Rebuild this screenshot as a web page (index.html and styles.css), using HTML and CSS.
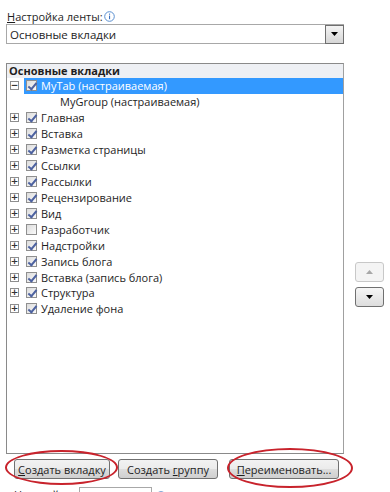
FILE: index.html
```html
<!DOCTYPE html>
<html>
<head>
<meta charset="utf-8">
<link rel="stylesheet" href="styles.css">
</head>
<body>
<div class="page">
  <div class="label-row">
    <span class="label"><u>Н</u>астройка ленты:</span>
    <svg class="info" width="11" height="11" viewBox="0 0 11 11"><circle cx="5.5" cy="5.5" r="4.8" fill="#fff" stroke="#5a8fd0" stroke-width="1"/><rect x="5" y="2.6" width="1.1" height="1.1" fill="#3a70c0"/><rect x="5" y="4.6" width="1.1" height="3.6" fill="#3a70c0"/></svg>
  </div>
  <div class="select">
    <span class="select-text">Основные вкладки</span>
    <span class="select-btn"><svg width="7" height="4" viewBox="0 0 7 4"><path d="M0 0H7L3.5 4Z" fill="#000"/></svg></span>
  </div>
  <div class="main">
    <div class="list">
      <div class="list-head">Основные вкладки</div>
      <div class="row selected">
        <span class="exp">−</span>
        <span class="hl"><span class="cb on"></span><span class="txt">MyTab (настраиваемая)</span></span>
      </div>
      <div class="row group"><span class="txt">MyGroup (настраиваемая)</span></div>
      <div class="row"><span class="exp">+</span><span class="hl"><span class="cb on"></span><span class="txt">Главная</span></span></div>
      <div class="row"><span class="exp">+</span><span class="hl"><span class="cb on"></span><span class="txt">Вставка</span></span></div>
      <div class="row"><span class="exp">+</span><span class="hl"><span class="cb on"></span><span class="txt">Разметка страницы</span></span></div>
      <div class="row"><span class="exp">+</span><span class="hl"><span class="cb on"></span><span class="txt">Ссылки</span></span></div>
      <div class="row"><span class="exp">+</span><span class="hl"><span class="cb on"></span><span class="txt">Рассылки</span></span></div>
      <div class="row"><span class="exp">+</span><span class="hl"><span class="cb on"></span><span class="txt">Рецензирование</span></span></div>
      <div class="row"><span class="exp">+</span><span class="hl"><span class="cb on"></span><span class="txt">Вид</span></span></div>
      <div class="row"><span class="exp">+</span><span class="hl"><span class="cb"></span><span class="txt">Разработчик</span></span></div>
      <div class="row"><span class="exp">+</span><span class="hl"><span class="cb on"></span><span class="txt">Надстройки</span></span></div>
      <div class="row"><span class="exp">+</span><span class="hl"><span class="cb on"></span><span class="txt">Запись блога</span></span></div>
      <div class="row"><span class="exp">+</span><span class="hl"><span class="cb on"></span><span class="txt">Вставка (запись блога)</span></span></div>
      <div class="row"><span class="exp">+</span><span class="hl"><span class="cb on"></span><span class="txt">Структура</span></span></div>
      <div class="row"><span class="exp">+</span><span class="hl"><span class="cb on"></span><span class="txt">Удаление фона</span></span></div>
    </div>
    <div class="side">
      <button class="mv disabled"><svg width="7" height="4" viewBox="0 0 7 4"><path d="M0 4H7L3.5 0Z" fill="#a8a8a8"/></svg></button>
      <button class="mv"><svg width="7" height="4" viewBox="0 0 7 4"><path d="M0 0H7L3.5 4Z" fill="#000"/></svg></button>
    </div>
  </div>
  <div class="btn-row">
    <button class="btn b1"><u>С</u>оздать вкладку</button>
    <button class="btn b2">Создать <u>г</u>руппу</button>
    <button class="btn b3"><u>П</u>ереименовать...</button>
    <span class="ring r1"></span>
    <span class="ring r2"></span>
  </div>
  <div class="last-row">
    <span class="last-label">Настройки:</span>
    <span class="last-box"></span>
    <span class="last-info"></span>
  </div>
</div>
</body>
</html>
```

FILE: styles.css
```css
* { box-sizing: border-box; }
html, body { margin: 0; padding: 0; background: #fff; overflow: hidden; }
body {
  font-family: "Open Sans", "Noto Sans", sans-serif;
  font-size: 11px;
  color: #1e1e1e;
  width: 390px;
  height: 492px;
}
.page { padding: 8px 0 0 6px; position: relative; }
.label-row { display: flex; align-items: center; height: 16px; padding-left: 1px; gap: 1px; }
.label u { text-decoration: underline; }
.info { margin-top: 1px; }
.select {
  width: 338px;
  height: 20px;
  border: 1px solid #a8a8a8;
  display: flex;
  align-items: center;
  justify-content: space-between;
}
.select-text { padding-left: 3px; font-size: 11.5px; }
.select-btn {
  width: 19px; height: 19px;
  margin-right: -1px;
  border: 1px solid #6f6f6f;
  background: linear-gradient(#f4f4f4, #d6d6d6);
  display: flex; align-items: center; justify-content: center;
}
.main { display: flex; margin-top: 19px; }
.list {
  width: 338px;
  height: 391px;
  border: 1px solid #8a8a8a;
  border-right-color: #a0a0a0;
}
.list-head {
  height: 14px;
  background: #eef0f4;
  font-weight: 700;
  padding-left: 2px;
  line-height: 14px;
}
.row { display: flex; align-items: center; height: 15.93px; }
.exp {
  width: 9px; height: 9px;
  margin-left: 3px;
  border: 1px solid #8e8e8e;
  background: #fff;
  display: flex; align-items: center; justify-content: center;
  font-size: 9px; line-height: 1; color: #333;
  font-family: "DejaVu Sans", sans-serif;
  font-weight: 700;
}
.hl { display: flex; align-items: center; height: 16px; margin-left: 5px; padding-left: 2px; flex: 1; }
.selected .hl { background: #3399ff; color: #fff; }
.cb {
  width: 11px; height: 11px;
  border: 1px solid #8f8f8f;
  background: linear-gradient(135deg, #dcdcdc, #fafafa);
  position: relative;
}
.cb.on::after {
  content: "";
  position: absolute;
  left: 3px; top: 0px;
  width: 3px; height: 7px;
  border: solid #4d62a0;
  border-width: 0 2px 2px 0;
  transform: rotate(40deg);
}
.txt { margin-left: 4px; white-space: nowrap; }
.group .txt { margin-left: 53px; }
.side { display: flex; flex-direction: column; gap: 5px; margin-left: 11px; margin-top: 199px; }
.mv {
  width: 29px; height: 20px;
  border: 1px solid #707070;
  border-radius: 3px;
  background: linear-gradient(#f6f6f6, #dddddd);
  display: flex; align-items: center; justify-content: center;
  padding: 0;
}
.mv.disabled { border-color: #c8c8c8; background: #f4f4f4; }
.btn-row { display: flex; margin-top: 5px; position: relative; height: 20px; }
.btn {
  height: 20px;
  border: 1px solid #707070;
  border-radius: 3px;
  background: linear-gradient(#f2f2f2 0%, #ebebeb 50%, #dddddd 51%, #cfcfcf 100%);
  font-family: "Open Sans", "Noto Sans", sans-serif;
  font-size: 11px;
  color: #1e1e1e;
  padding: 0;
}
.b1 { width: 96px; margin-left: 8px; }
.b2 { width: 100px; margin-left: 8px; }
.b3 { width: 110px; margin-left: 11px; }
.ring { position: absolute; border: 2px solid #c8232c; border-radius: 50%; }
.r1 { left: -1px; top: -9px; width: 113px; height: 35px; }
.r2 { left: 221px; top: -11px; width: 126px; height: 40px; }
.last-row { display: flex; align-items: flex-start; margin-top: 8px; height: 20px; }
.last-label { width: 65px; margin-left: 8px; font-size: 11px; line-height: 14px; margin-top: 1px; color: #1e1e1e; white-space: nowrap; }
.last-box { width: 73px; height: 20px; border: 1px solid #a8a8a8; }
.last-info { margin-left: 4px; margin-top: 4px; width: 10px; height: 10px; border: 1px solid #7fa7d8; border-radius: 50%; }
```
